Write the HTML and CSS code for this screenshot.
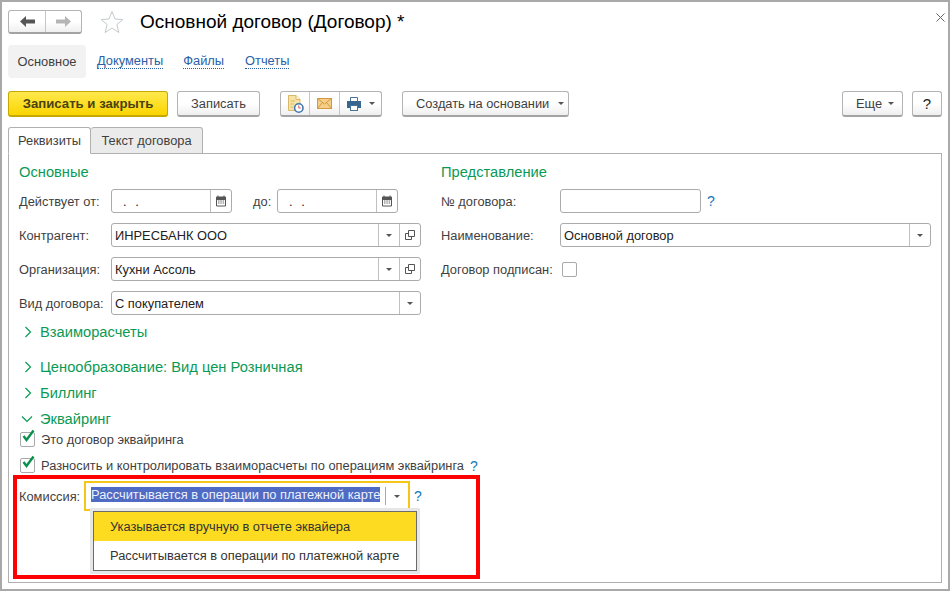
FILE: index.html
```html
<!DOCTYPE html>
<html lang="ru">
<head>
<meta charset="utf-8">
<title>Основной договор (Договор)</title>
<link rel="stylesheet" href="styles.css">
</head>
<body>
<div class="window">
  <header class="head">
    <div class="btn-group nav-arrows">
      <span class="seg arrow-seg"><svg width="15" height="11" viewBox="0 0 15 11"><path d="M0 5.500 L6 0 V3.500 H15 V7.500 H6 V11 Z" fill="#555"/></svg></span>
      <span class="seg arrow-seg"><svg width="15" height="11" viewBox="0 0 15 11"><path d="M15 5.500 L9 0 V3.500 H0 V7.500 H9 V11 Z" fill="#b5b5b5"/></svg></span>
    </div>
    <svg class="star" width="24" height="24" viewBox="0 0 24 24"><path d="M12 1.500 L15 9 L23 9.500 L16.800 14.600 L18.900 22.500 L12 18.100 L5.100 22.500 L7.200 14.600 L1 9.500 L9 9 Z" fill="#fff" stroke="#c4c9cc"/></svg>
    <h1 class="title">Основной договор (Договор) *</h1>
    <svg class="close" width="9" height="9" viewBox="0 0 9 9"><path d="M.5 .5 L8.500 8.500 M8.500 .5 L.5 8.500" stroke="#666" fill="none"/></svg>
  </header>

  <nav class="nav">
    <span class="nav-current">Основное</span>
    <a class="nav-link link-docs">Документы</a>
    <a class="nav-link link-files">Файлы</a>
    <a class="nav-link link-reports">Отчеты</a>
  </nav>

  <div class="toolbar">
    <button class="btn btn-primary">Записать и закрыть</button>
    <button class="btn btn-save">Записать</button>
    <div class="btn-group icons">
      <span class="seg icon-seg icon-doc"><svg width="17" height="18" viewBox="0 0 17 18"><path d="M1.500 .5 H9 L13 4.500 V15.500 H1.500 Z" fill="#f6e3a5" stroke="#d9b968"/><path d="M9 .5 V4.500 H13" fill="#fff6d8" stroke="#d9b968"/><path d="M3.500 6 H8 M3.500 9 H7 M3.500 12 H6" stroke="#d9b968"/><circle cx="11.800" cy="13" r="4.200" fill="#fff" stroke="#3f79ad" stroke-width="1.600"/><path d="M11.800 10.500 V13 H13.800" stroke="#d9534f" fill="none"/></svg></span>
      <span class="seg icon-seg"><svg width="15" height="11" viewBox="0 0 15 11"><rect x=".5" y=".5" width="14" height="10" fill="#f5cf8a" stroke="#d39a3d"/><path d="M.5 .5 L7.500 6 L14.500 .5 M.5 10.500 L5.500 4.500 M14.500 10.500 L9.500 4.500" stroke="#d39a3d" fill="none"/></svg></span>
      <span class="seg icon-seg print-seg"><svg width="14" height="14" viewBox="0 0 14 14"><path d="M3.500 .5 H10.500 V5 H3.500 Z" fill="#fff" stroke="#4a7295"/><rect x=".5" y="4.500" width="13" height="6" fill="#39668e" stroke="#39668e"/><rect x="3.500" y="8.500" width="7" height="5" fill="#fff" stroke="#4a7295"/></svg><i class="caret"></i></span>
    </div>
    <button class="btn btn-create">Создать на основании<i class="caret"></i></button>
    <button class="btn btn-more">Еще<i class="caret"></i></button>
    <button class="btn btn-help">?</button>
  </div>

  <div class="tabs">
    <span class="tab tab-active">Реквизиты</span>
    <span class="tab">Текст договора</span>
  </div>

  <main class="panel">
    <div class="columns">
      <section class="col-left">
        <h2 class="heading">Основные</h2>
        <div class="row">
          <label class="label">Действует от:</label>
          <div class="field field-date"><span class="value date-mask">. &nbsp;.</span><span class="fbtn"><svg width="12" height="12" viewBox="0 0 12 12"><path d="M1.500 2.500 H10.500 V11 H1.500 Z" fill="#fff" stroke="#555"/><path d="M1.500 2 H10.500 V4.500 H1.500 Z" fill="#555" stroke="#555"/><path d="M3 .5 V2 M9 .5 V2" stroke="#555"/><path d="M3 6 H4.500 M5.300 6 H6.800 M7.600 6 H9.100 M3 8 H4.500 M5.300 8 H6.800 M7.600 8 H9.100" stroke="#666"/></svg></span></div>
          <label class="label label-to">до:</label>
          <div class="field field-date"><span class="value date-mask">. &nbsp;.</span><span class="fbtn"><svg width="12" height="12" viewBox="0 0 12 12"><path d="M1.500 2.500 H10.500 V11 H1.500 Z" fill="#fff" stroke="#555"/><path d="M1.500 2 H10.500 V4.500 H1.500 Z" fill="#555" stroke="#555"/><path d="M3 .5 V2 M9 .5 V2" stroke="#555"/><path d="M3 6 H4.500 M5.300 6 H6.800 M7.600 6 H9.100 M3 8 H4.500 M5.300 8 H6.800 M7.600 8 H9.100" stroke="#666"/></svg></span></div>
        </div>
        <div class="row">
          <label class="label">Контрагент:</label>
          <div class="field field-wide"><span class="value">ИНРЕСБАНК ООО</span><span class="fbtn"><i class="caret"></i></span><span class="fbtn"><svg width="10" height="10" viewBox="0 0 10 10"><path d="M3.500 .5 H9.500 V6.500 H3.500 Z M3.500 3.500 H.5 V9.500 H6.500 V6.500" fill="none" stroke="#555"/></svg></span></div>
        </div>
        <div class="row">
          <label class="label">Организация:</label>
          <div class="field field-wide"><span class="value">Кухни Ассоль</span><span class="fbtn"><i class="caret"></i></span><span class="fbtn"><svg width="10" height="10" viewBox="0 0 10 10"><path d="M3.500 .5 H9.500 V6.500 H3.500 Z M3.500 3.500 H.5 V9.500 H6.500 V6.500" fill="none" stroke="#555"/></svg></span></div>
        </div>
        <div class="row">
          <label class="label">Вид договора:</label>
          <div class="field field-wide"><span class="value">С покупателем</span><span class="fbtn"><i class="caret"></i></span></div>
        </div>
      </section>
      <section class="col-right">
        <h2 class="heading">Представление</h2>
        <div class="row">
          <label class="label label-r">№ договора:</label>
          <div class="field field-num"></div>
          <span class="hint hint-num">?</span>
        </div>
        <div class="row">
          <label class="label label-r">Наименование:</label>
          <div class="field field-wide"><span class="value">Основной договор</span><span class="fbtn"><i class="caret"></i></span></div>
        </div>
        <div class="row row-signed">
          <label class="label">Договор подписан:</label>
          <span class="box"></span>
        </div>
      </section>
    </div>

    <div class="group group-1"><svg class="chev" width="8" height="12" viewBox="0 0 8 12"><path d="M1.500 1 L6.500 6 L1.500 11" fill="none" stroke="#0b9a55" stroke-width="1.200"/></svg>Взаиморасчеты</div>
    <div class="group group-2"><svg class="chev" width="8" height="12" viewBox="0 0 8 12"><path d="M1.500 1 L6.500 6 L1.500 11" fill="none" stroke="#0b9a55" stroke-width="1.200"/></svg>Ценообразование: Вид цен Розничная</div>
    <div class="group group-3"><svg class="chev" width="8" height="12" viewBox="0 0 8 12"><path d="M1.500 1 L6.500 6 L1.500 11" fill="none" stroke="#0b9a55" stroke-width="1.200"/></svg>Биллинг</div>
    <div class="group group-4"><svg class="chev chev-open" width="12" height="8" viewBox="0 0 12 8"><path d="M1 1.500 L6 6.500 L11 1.500" fill="none" stroke="#0b9a55" stroke-width="1.200"/></svg>Эквайринг</div>

    <div class="check check-1"><span class="box box-on"><svg width="16" height="16" viewBox="0 0 16 16"><path d="M3.500 7 L6.500 11 L13.500 1.500" fill="none" stroke="#0b8f4c" stroke-width="2.400"/></svg></span>Это договор эквайринга</div>
    <div class="check check-2"><span class="box box-on"><svg width="16" height="16" viewBox="0 0 16 16"><path d="M3.500 7 L6.500 11 L13.500 1.500" fill="none" stroke="#0b8f4c" stroke-width="2.400"/></svg></span>Разносить и контролировать взаиморасчеты по операциям эквайринга<span class="hint hint-inline">?</span></div>

    <div class="row row-fee">
      <label class="label label-fee">Комиссия:</label>
      <div class="field field-focus"><span class="value value-sel"><span class="selected">Рассчитывается в операции по платежной карте</span></span><span class="fbtn fbtn-focus"><i class="caret"></i></span></div>
      <span class="hint hint-fee">?</span>
    </div>
  </main>

  <ul class="menu">
    <li class="menu-item menu-hot">Указывается вручную в отчете эквайера</li>
    <li class="menu-item">Рассчитывается в операции по платежной карте</li>
  </ul>
  <div class="callout"></div>
</div>
</body>
</html>
```

FILE: styles.css
```css
* { box-sizing: border-box; }
html, body { margin: 0; padding: 0; background: #fff; }
body { font-family: "Liberation Sans", Arial, sans-serif; font-size: 12.850px; color: #3f3f3f; }
.window { position: relative; width: 950px; height: 591px; border: 2px solid #a9a9a9; padding: 8px 6px 0; overflow: hidden; background: #fff; }

.head { display: flex; align-items: center; height: 24px; }
.star { margin-left: 18px; }
.title { margin: 0 0 0 16px; font-size: 19px; font-weight: 400; color: #000; white-space: nowrap; }
.close { margin-left: auto; margin-right: -3px; margin-top: -10px; }

.btn-group { display: flex; border: 1px solid #b4b4b4; border-bottom: 2px solid #a3a3a3; border-radius: 3px; background: linear-gradient(#fff 50%, #efefef); }
.seg { display: flex; align-items: center; justify-content: center; border-left: 1px solid #c6c6c6; }
.seg:first-child { border-left: 0; }
.nav-arrows { width: 74px; height: 24px; }
.arrow-seg { width: 36px; }

.nav { display: flex; align-items: center; height: 33px; margin-top: 11px; }
.nav-current { display: flex; align-items: center; justify-content: center; width: 78px; height: 33px; background: #f2f2f2; border-radius: 4px; }
.nav-link { color: #2a5fa8; border-bottom: 1px dotted #2a5fa8; line-height: 14px; white-space: nowrap; }
.link-docs { margin-left: 11px; }
.link-files { margin-left: 20px; }
.link-reports { margin-left: 21px; }

.toolbar { display: flex; align-items: flex-start; height: 26px; margin-top: 13px; }
.btn { height: 26px; padding: 0; border: 1px solid #b4b4b4; border-bottom: 2px solid #a3a3a3; border-radius: 3px; background: linear-gradient(#fff 50%, #efefef); color: #3f3f3f; font: 12.850px "Liberation Sans", Arial, sans-serif; display: flex; align-items: center; justify-content: center; }
.btn-primary { width: 160px; font-weight: 700; font-size: 13.200px; color: #4a4310; background: linear-gradient(#ffe94d, #fbd500); border-color: #c6a800; }
.btn-save { width: 83px; margin-left: 9px; }
.icons { height: 26px; margin-left: 20px; width: 102px; }
.icon-seg { width: 30px; }
.icon-doc { width: 28px; }
.print-seg { width: 42px; gap: 8px; }
.btn-create { width: 167px; margin-left: 20px; justify-content: flex-start; padding-left: 13px; gap: 9px; }
.btn-more { width: 61px; margin-left: auto; justify-content: flex-start; padding-left: 13px; gap: 6px; }
.btn-help { width: 30px; margin-left: 9px; font-size: 15px; color: #222; }
.caret { display: inline-block; width: 0; height: 0; border-left: 3px solid transparent; border-right: 3px solid transparent; border-top: 3px solid #555; }

.tabs { display: flex; align-items: flex-end; height: 27px; margin-top: 10px; position: relative; z-index: 1; margin-bottom: -1px; }
.tab { display: flex; align-items: center; justify-content: center; height: 27px; width: 112px; background: #ebebeb; border: 1px solid #b0b0b0; border-radius: 3px 3px 0 0; border-left: 0; }
.tab-active { width: 83px; background: #fff; border-left: 1px solid #b0b0b0; border-bottom-color: #fff; }

.panel { height: 430px; border: 1px solid #b0b0b0; padding: 8px 10px 0; }
.columns { display: flex; gap: 20px; }
.col-left { width: 402px; }
.col-right { flex: 1; }
.heading { margin: 0 0 7px; height: 20px; line-height: 20px; font-size: 14.700px; font-weight: 400; color: #0b9a55; }
.row { display: flex; align-items: center; height: 24px; margin-bottom: 10px; }
.label { flex: none; width: 92px; white-space: nowrap; }
.label-r { width: 119px; }
.label-to { width: 45px; padding-left: 21px; }
.field { display: flex; height: 24px; border: 1px solid #ababab; border-radius: 3px; background: #fff; color: #222; }
.value { flex: 1; padding-left: 3px; line-height: 24px; white-space: nowrap; overflow: hidden; }
.date-mask { padding-left: 11px; letter-spacing: .5px; }
.fbtn { display: flex; flex: none; align-items: center; justify-content: center; width: 21px; border-left: 1px solid #c0c0c0; }
.field-date { width: 121px; }
.field-wide { flex: 1; }
.field-num { width: 141px; }
.hint { color: #1479bd; font-size: 14px; }
.hint-num { margin-left: 6px; }
.row-signed { height: 19px; margin-top: 13px; }
.row-signed .label { width: 121px; }
.box { display: inline-block; flex: none; width: 15px; height: 15px; border: 1px solid #a9a9a9; border-radius: 2px; background: #fff; position: relative; }
.box svg { position: absolute; left: -1px; top: -4px; }

.group { display: flex; align-items: center; height: 20px; font-size: 14.700px; color: #0b9a55; white-space: nowrap; }
.chev { width: 8px; margin-left: 5px; margin-right: 8px; }
.chev-open { width: 12px; margin-left: 2px; margin-right: 7px; }
.group-1 { margin-top: -3px; }
.group-2 { margin-top: 15px; }
.group-3, .group-4 { margin-top: 6px; }

.check { display: flex; align-items: center; height: 19px; white-space: nowrap; color: #3f3f3f; }
.check .box { margin: 0 6px 0 1px; }
.check-1 { margin-top: 1px; }
.check-2 { margin-top: 7px; }
.hint-inline { margin-left: 6px; }

.row-fee { margin: 6px 0 0; height: 30px; }
.label-fee { width: 65px; }
.field-focus { width: 326px; height: 30px; border: 2px solid #f5c518; border-radius: 0; padding: 4px 0 4px 5px; }
.value-sel { padding: 0; line-height: 16px; }
.selected { background: #4f6bc4; color: #eef1fb; }
.fbtn-focus { width: 23px; border-left: 1px solid #a8a8a8; }
.hint-fee { margin-left: 4px; }

.menu { position: absolute; left: 91px; top: 509px; width: 324px; height: 60px; margin: 0; padding: 0; list-style: none; border: 1px solid #6b6b6b; background: #fff; box-shadow: 0 0 0 3px #e6e6e6; color: #333; }
.menu-item { display: flex; align-items: center; height: 29px; padding-left: 16px; }
.menu-hot { background: #fcdb20; color: #333; }
.callout { position: absolute; left: 11px; top: 473px; width: 467px; height: 104px; border: 4px solid #f00; pointer-events: none; }
```
